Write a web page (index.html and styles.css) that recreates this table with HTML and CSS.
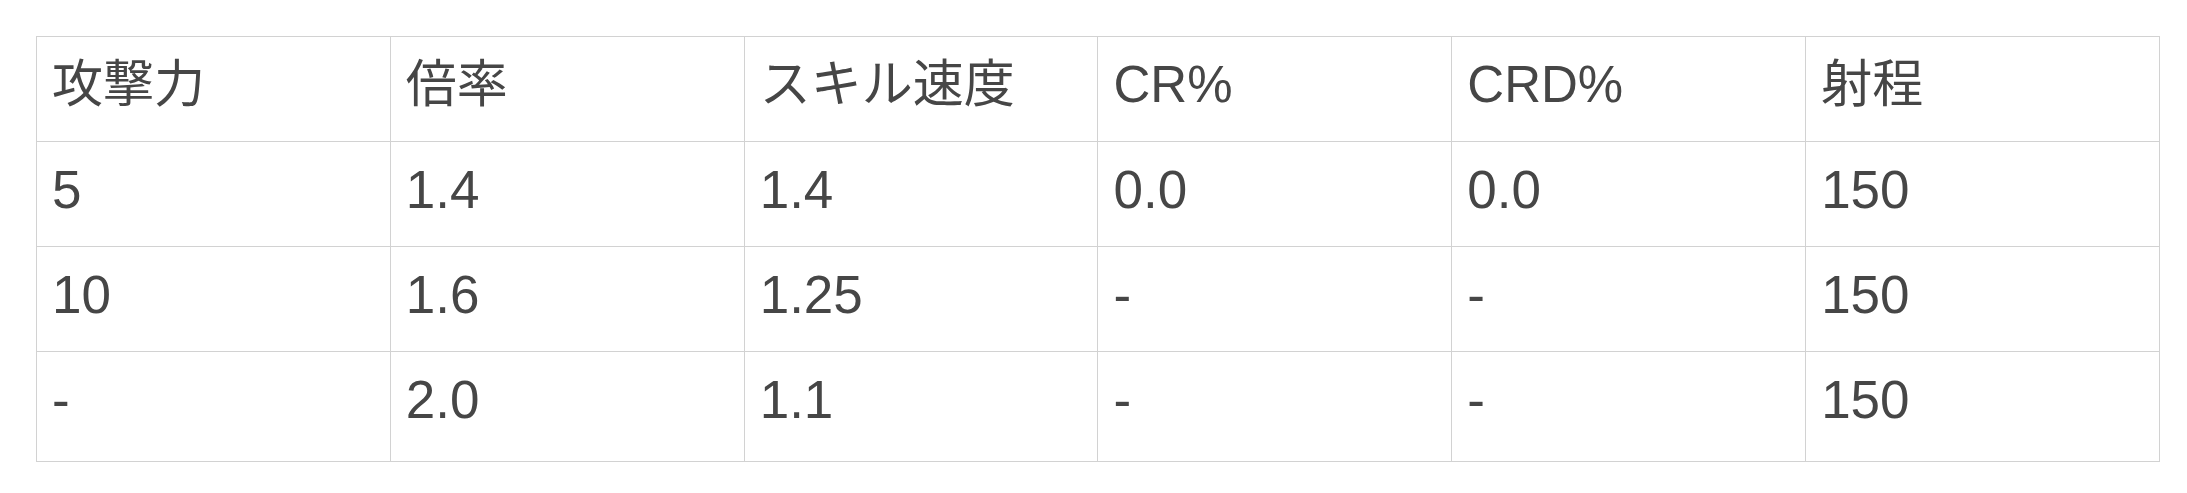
FILE: index.html
```html
<!DOCTYPE html>
<html lang="ja">
<head>
<meta charset="utf-8">
<title>表</title>
<link rel="stylesheet" href="styles.css">
</head>
<body>
<div class="page">
  <table class="stats">
    <thead>
      <tr><th>攻撃力</th><th>倍率</th><th>スキル速度</th><th>CR%</th><th>CRD%</th><th>射程</th></tr>
    </thead>
    <tbody>
      <tr><td>5</td><td>1.4</td><td>1.4</td><td>0.0</td><td>0.0</td><td>150</td></tr>
      <tr><td>10</td><td>1.6</td><td>1.25</td><td>-</td><td>-</td><td>150</td></tr>
      <tr class="last"><td>-</td><td>2.0</td><td>1.1</td><td>-</td><td>-</td><td>150</td></tr>
    </tbody>
  </table>
</div>
</body>
</html>
```
FILE: styles.css
```css
html, body {
  margin: 0;
  background: #ffffff;
}
.page {
  padding: 36px 27px 0 36px;
}
.stats {
  width: 2124px;
  table-layout: fixed;
  border-collapse: collapse;
  font-family: "Liberation Sans", "Noto Sans CJK JP", sans-serif;
  font-size: 53px;
  color: #464646;
}
.stats th,
.stats td {
  border: 1px solid #d2d2d2;
  height: 96px;
  padding: 0 15px 8px;
  text-align: left;
  font-weight: normal;
  vertical-align: middle;
  line-height: 1.2;
}
.stats th {
  font-size: 51px;
}
.stats tr.last td {
  padding-bottom: 13px;
}
```
